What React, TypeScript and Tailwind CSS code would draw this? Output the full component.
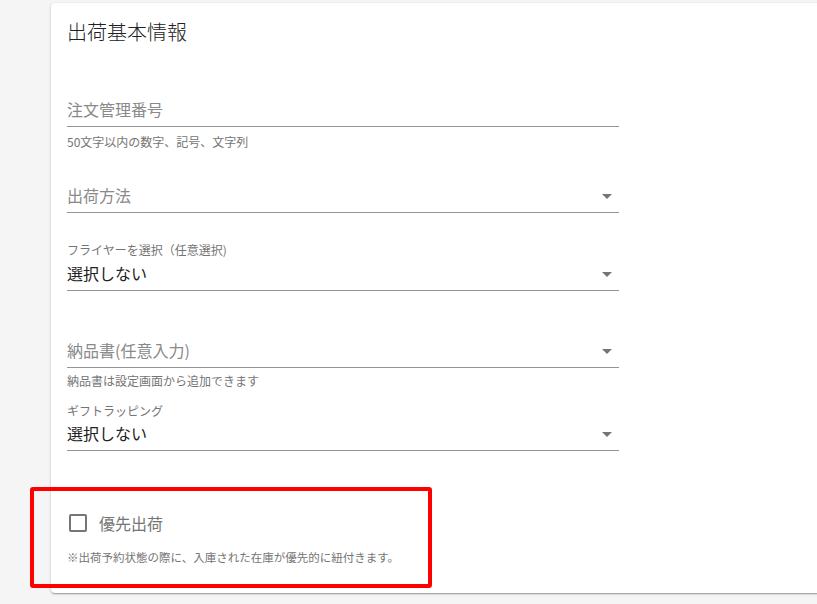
import React from "react";

const font = { fontFamily: '"Noto Sans CJK JP", "Noto Sans", sans-serif' };

function Arrow() {
  return (
    <svg width="10" height="5" viewBox="0 0 10 5" className="absolute right-[7px] top-[14px]">
      <path d="M0 0 L10 0 L5 5 Z" fill="#757575" />
    </svg>
  );
}

function Row({ text, value, arrow }: { text: string; value?: boolean; arrow?: boolean }) {
  return (
    <div className="relative h-[33px] border-b border-[#949494] pt-[6px]">
      <div className={"text-[16px] leading-[19px] " + (value ? "text-[#212121]" : "text-[#8a8a8a]")}>{text}</div>
      {arrow && <Arrow />}
    </div>
  );
}

export default function App() {
  return (
    <div className="relative h-[604px] w-[817px] overflow-hidden bg-[#f5f5f5]" style={font}>
      <div className="ml-[51px] mt-[3px] h-[590px] w-[800px] rounded-[4px] bg-white pl-[16px] pt-[17px] shadow-[0_1px_3px_rgba(0,0,0,0.2),0_1px_1px_rgba(0,0,0,0.14),0_2px_1px_-1px_rgba(0,0,0,0.12)]">
        <div className="text-[20px] font-light leading-[24px] text-[#212121]">出荷基本情報</div>
        <div className="w-[552px]">
          <div className="mt-[50px]">
            <Row text="注文管理番号" />
            <div className="mt-[5px] text-[12px] leading-[20px] text-[#757575]">50文字以内の数字、記号、文字列</div>
          </div>
          <div className="mt-[28px]">
            <Row text="出荷方法" arrow />
          </div>
          <div className="mt-[29px]">
            <div className="text-[12px] leading-[16px] text-[#757575]">フライヤーを選択（任意選択)</div>
            <Row text="選択しない" value arrow />
          </div>
          <div className="mt-[44px]">
            <Row text="納品書(任意入力)" arrow />
            <div className="mt-[3px] text-[12px] leading-[20px] text-[#757575]">納品書は設定画面から追加できます</div>
          </div>
          <div className="mt-[12px]">
            <div className="text-[12px] leading-[15px] text-[#757575]">ギフトラッピング</div>
            <Row text="選択しない" value arrow />
          </div>
          <div className="mt-[62px] flex items-center">
            <div className="ml-[2px] h-[18px] w-[18px] rounded-[2px] border-2 border-[#757575]" />
            <div className="ml-[12px] text-[16px] leading-[20px] text-[#757575]">優先出荷</div>
          </div>
          <div className="mt-[16px] text-[11.5px] leading-[16px] text-[#757575]">※出荷予約状態の際に、入庫された在庫が優先的に紐付きます。</div>
        </div>
      </div>
      <div className="absolute left-[30px] top-[487px] h-[101px] w-[402px] rounded-[3px] border-[4px] border-[#ff0000]" />
    </div>
  );
}
